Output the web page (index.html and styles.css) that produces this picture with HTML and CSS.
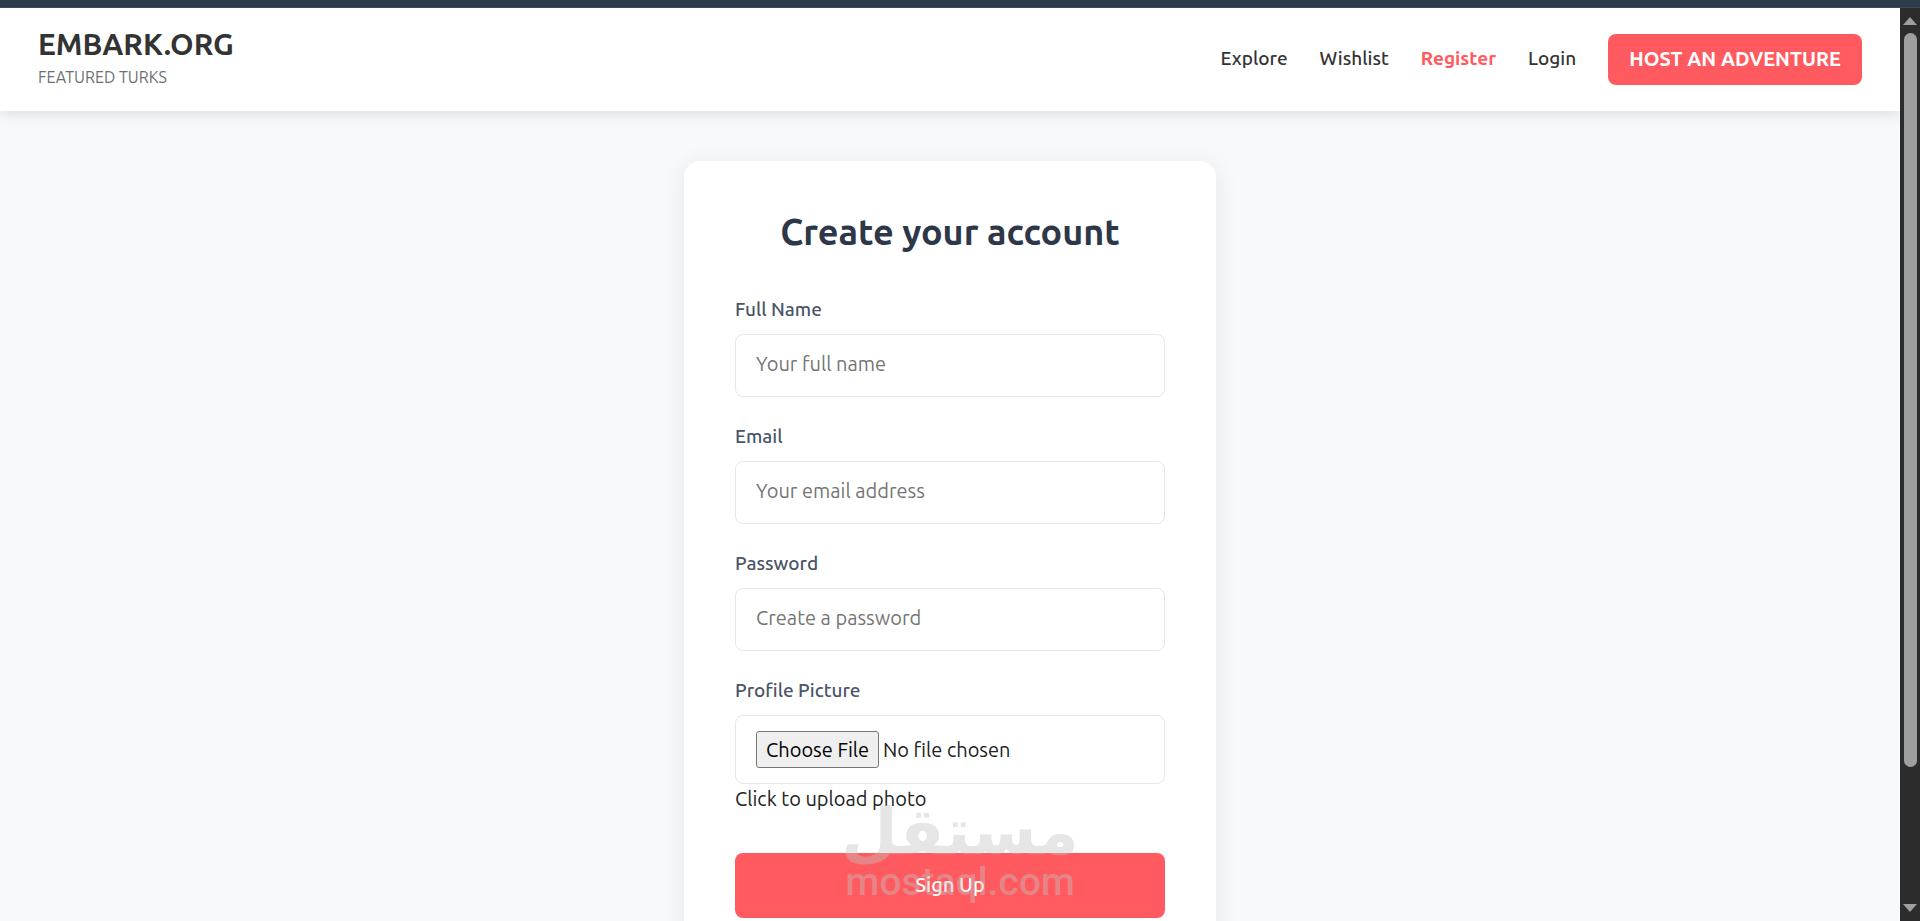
FILE: index.html
```
<!DOCTYPE html>
<html lang="en">
<head>
    <meta charset="UTF-8">
    <title>Register - Embark.org</title>
    <meta name="viewport" content="width=device-width, initial-scale=1">
    <link rel="stylesheet" href="styles.css">
</head>
<body>
<div class="top-strip"></div>
<div class="window">
    <div class="page">
        <header class="header">
            <div class="brand">
                <a href="#" class="brand__name">EMBARK.ORG</a>
                <span class="brand__tagline">FEATURED TURKS</span>
            </div>
            <nav class="nav">
                <a href="#" class="nav__link">Explore</a>
                <a href="#" class="nav__link">Wishlist</a>
                <a href="#" class="nav__link active">Register</a>
                <a href="#" class="nav__link">Login</a>
                <a href="#" class="nav__button">HOST AN ADVENTURE</a>
            </nav>
        </header>

        <main class="main">
            <form class="card">
                <h1 class="card__title">Create your account</h1>
                <div class="form-group">
                    <label for="name">Full Name</label>
                    <input type="text" id="name" placeholder="Your full name">
                </div>
                <div class="form-group">
                    <label for="email">Email</label>
                    <input type="email" id="email" placeholder="Your email address">
                </div>
                <div class="form-group">
                    <label for="password">Password</label>
                    <input type="password" id="password" placeholder="Create a password">
                </div>
                <div class="form-group">
                    <label for="picture">Profile Picture</label>
                    <input type="file" id="picture">
                    <p class="hint">Click to upload photo</p>
                </div>
                <button type="submit" class="submit">Sign Up</button>
            </form>
        </main>
    </div>

    <div class="scrollbar">
        <svg class="scrollbar__arrow" viewBox="0 0 14 8"><path d="M7 0 14 8H0z"/></svg>
        <div class="scrollbar__track">
            <div class="scrollbar__thumb"></div>
        </div>
        <svg class="scrollbar__arrow" viewBox="0 0 14 8"><path d="M0 0h14L7 8z"/></svg>
    </div>
</div>

<div class="watermark">
    <span class="watermark__arabic" lang="ar">مستقل</span>
    <span class="watermark__latin">mostaql.com</span>
</div>
</body>
</html>
```
FILE: styles.css
```
* {
    margin: 0;
    box-sizing: border-box;
}

body {
    --accent: #ff5a5f;
    --border: #e2e8f0;
    display: flex;
    flex-direction: column;
    height: 100vh;
    overflow: hidden;
    font-family: Ubuntu, "Noto Sans", sans-serif;
    font-size: 20px;
    color: #222;
}

a {
    text-decoration: none;
    color: inherit;
}

.top-strip {
    flex: none;
    height: 8px;
    background: #2d3c4a;
    border-bottom: 1px solid #474656;
}

.window {
    flex: 1;
    min-height: 0;
    display: flex;
}

.page {
    flex: 1;
    overflow: hidden;
    background: #f8f9fb;
}

/*header*/

.header {
    display: flex;
    align-items: center;
    justify-content: space-between;
    padding: 16px 38px;
    background: #fff;
    box-shadow: 0 4px 12px rgba(0, 0, 0, 0.1);
}

.brand {
    display: flex;
    flex-direction: column;
    padding-bottom: 5px;
}

.brand__name {
    font-size: 30px;
    line-height: 40px;
    font-weight: 600;
    color: #333;
}

.brand__tagline {
    font-size: 16px;
    line-height: 26px;
    color: #6b7075;
}

.nav {
    display: flex;
    align-items: center;
    gap: 32px;
    font-size: 19px;
    font-weight: 500;
    color: #333;
}

.nav__link {
    padding-bottom: 3px;
}

.nav__link.active {
    color: var(--accent);
    font-weight: 600;
}

.nav__button {
    padding: 0 21px 2px;
    border-radius: 8px;
    background: var(--accent);
    color: #fff;
    font-size: 20px;
    font-weight: 600;
    line-height: 49px;
}

/*form*/

.main {
    padding: 50px 20px;
}

.card {
    max-width: 532px;
    margin: 0 auto;
    padding: 51px;
    border-radius: 16px;
    background: #fff;
    box-shadow: 0 4px 24px rgba(0, 0, 0, 0.08);
}

.card__title {
    margin-bottom: 42px;
    font-size: 36px;
    line-height: 40px;
    font-weight: 600;
    text-align: center;
    color: #2d3748;
}

.form-group {
    margin-bottom: 24px;
}

.form-group label {
    display: block;
    margin-bottom: 10px;
    font-size: 19px;
    line-height: 30px;
    font-weight: 500;
    color: #4a5568;
}

.form-group input {
    display: block;
    width: 100%;
    height: 63px;
    padding: 12px 20px 16px;
    border: 1px solid var(--border);
    border-radius: 8px;
    background: #fff;
    font: inherit;
    color: inherit;
}

.form-group input::placeholder {
    color: #757575;
}

.form-group input[type="file"] {
    height: 69px;
    padding: 15px 20px;
}

.form-group input::file-selector-button {
    height: 37px;
    padding: 0 9px;
    border: 1px solid #767676;
    border-radius: 3px;
    background: #efefef;
    font: inherit;
    color: #000;
}

.hint {
    line-height: 30px;
}

.submit {
    display: block;
    width: 100%;
    margin-top: 39px;
    padding: 0 0 2px;
    border: none;
    border-radius: 8px;
    background: var(--accent);
    font: inherit;
    font-weight: 500;
    line-height: 63px;
    color: #fff;
}

/*scrollbar*/

.scrollbar {
    display: flex;
    flex-direction: column;
    align-items: center;
    gap: 8px;
    width: 20px;
    padding: 9px 0;
    background: #2c2c2c;
}

.scrollbar__arrow {
    width: 14px;
    height: 8px;
    fill: #9f9f9f;
}

.scrollbar__track {
    flex: 1;
}

.scrollbar__thumb {
    width: 13px;
    height: 85%;
    border-radius: 7px;
    background: #9f9f9f;
}

/*watermark*/

.watermark {
    position: fixed;
    left: 0;
    right: 0;
    bottom: 19px;
    display: flex;
    flex-direction: column;
    align-items: center;
    color: #c3c3c3;
    opacity: 0.41;
    pointer-events: none;
}

.watermark__arabic {
    font-family: "DejaVu Sans", sans-serif;
    font-size: 65px;
    font-weight: 700;
    line-height: 60px;
}

.watermark__latin {
    font-family: Roboto, sans-serif;
    font-size: 39px;
    font-weight: 500;
    line-height: 40px;
}
```
